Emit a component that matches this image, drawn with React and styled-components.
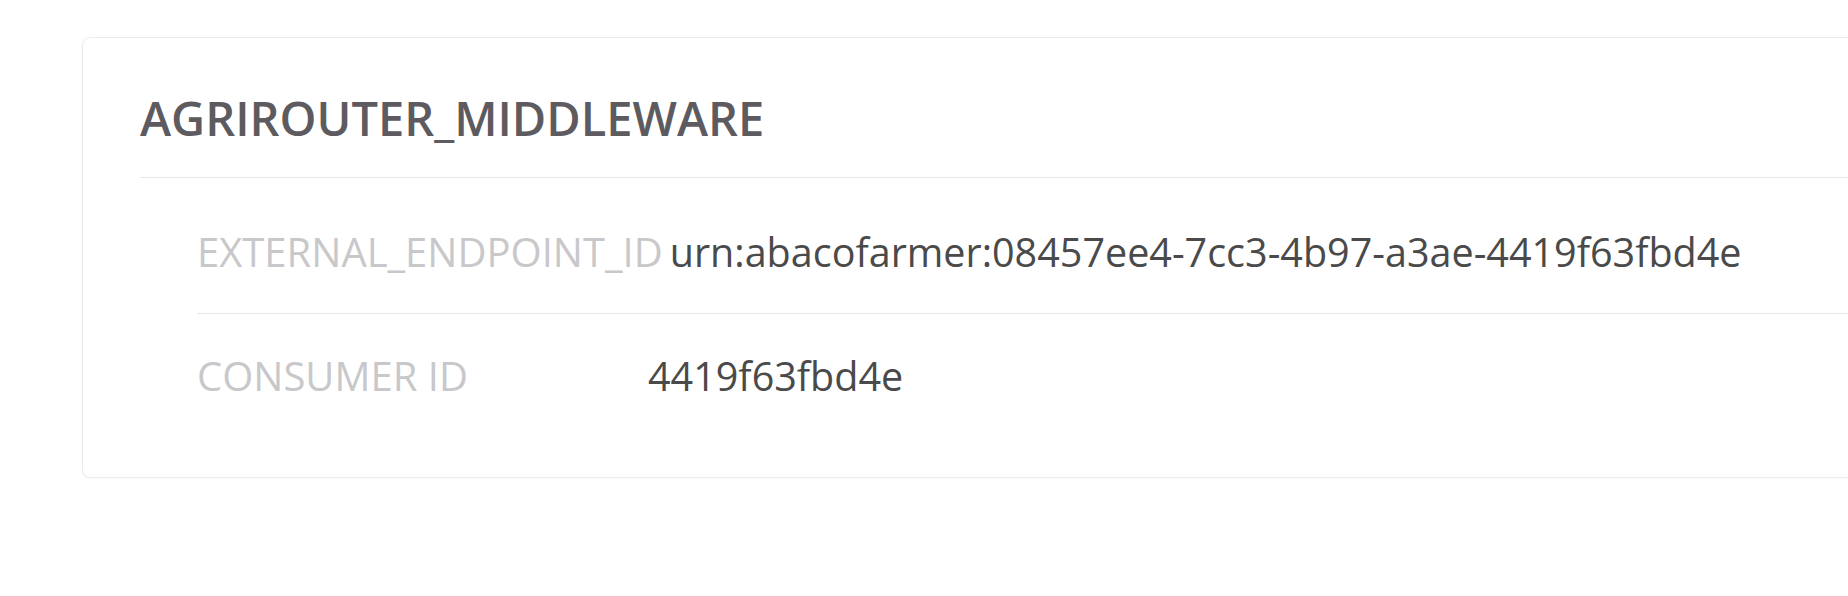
import React from 'react';
import styled, { createGlobalStyle } from 'styled-components';

const GlobalStyle = createGlobalStyle`
  html, body {
    margin: 0;
    padding: 0;
    background: #ffffff;
    overflow: hidden;
  }
  body {
    font-family: "Open Sans", "Liberation Sans", sans-serif;
  }
`;

const StyledPage = styled.div`
  padding: 37px 0 0 82px;
  width: 1848px;
  height: 596px;
  box-sizing: border-box;
  overflow: hidden;
`;
const StyledCard = styled.div`
  width: 1900px;
  background: #fff;
  border: 1px solid #ebebeb;
  border-radius: 8px;
  box-shadow: 0 1px 3px rgba(0, 0, 0, 0.03);
  padding: 0 0 40px 57px;
  box-sizing: border-box;
`;
const StyledTitle = styled.h2`
  margin: 0;
  padding: 48px 0 27px;
  border-bottom: 1px solid #e8e8e8;
  font-size: 47px;
  font-weight: 600;
  color: #5d5b60;
  line-height: 1.362;
`;
const StyledList = styled.div`
  padding: 12px 0 0 57px;
`;
const StyledRow = styled.div`
  display: flex;
  align-items: baseline;
  padding: 35px 0 33px;
  font-size: 40px;
  line-height: 1.362;
  border-bottom: ${(props) => (props.last ? 'none' : '1px solid #e8e8e8')};
`;
const StyledLabel = styled.div`
  min-width: 444px;
  padding-right: 7px;
  flex: 0 0 auto;
  color: #c8c8ca;
  font-weight: 400;
`;
const StyledValue = styled.div`
  color: #4a4a4a;
  font-size: 39.5px;
`;

const rows = [
  {label: 'EXTERNAL_ENDPOINT_ID', value: 'urn:abacofarmer:08457ee4-7cc3-4b97-a3ae-4419f63fbd4e'},
  {label: 'CONSUMER ID', value: '4419f63fbd4e'},
];

export default function App() {
  return (
    <>
      <GlobalStyle />
      <StyledPage>
        <StyledCard>
          <StyledTitle>AGRIROUTER_MIDDLEWARE</StyledTitle>
          <StyledList>
            {rows.map((row, index) => (
              <StyledRow key={row.label} last={index === rows.length - 1}>
                <StyledLabel>{row.label}</StyledLabel>
                <StyledValue>{row.value}</StyledValue>
              </StyledRow>
            ))}
          </StyledList>
        </StyledCard>
      </StyledPage>
    </>
  );
}
